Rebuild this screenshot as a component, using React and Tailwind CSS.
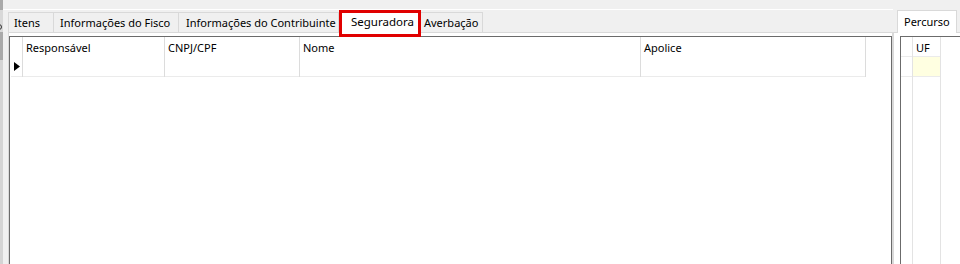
import React from "react";

const cols = [
  { label: "Responsável", w: 142 },
  { label: "CNPJ/CPF", w: 135 },
  { label: "Nome", w: 341 },
  { label: "Apolice", w: 225 },
];

export default function App() {
  return (
    <div className="w-[960px] h-[264px] bg-[#f0f0f0] flex overflow-hidden font-['Noto_Sans',sans-serif] text-[11px] leading-none text-black whitespace-nowrap">
      {/* left edge strip */}
      <div className="w-[3px] shrink-0 flex flex-col">
        <div className="h-[10px] bg-[#a9a9a9]" />
        <div className="h-[13px] bg-[#d8d8d8]" />
        <div className="h-[9px] bg-[#d8d8d8] overflow-hidden relative">
          <div className="absolute left-[-4px] top-[1px] w-[6px] h-[6px] rounded-full border border-[#333]" />
        </div>
        <div className="h-[28px] bg-[#a9a9a9]" />
        <div className="flex-1 bg-[#d4d4d4]" />
      </div>

      {/* main tab area */}
      <div className="w-[890px] shrink-0 flex flex-col">
        <div className="h-[9px]" />
        <div className="h-[1px] bg-white" />
        <div className="h-[22px] flex items-end pl-[5px] relative z-10">
          <div className="w-[46px] h-[20px] border border-b-0 border-[#d9d9d9] bg-[#f0f0f0] pl-[5px] flex items-center">Itens</div>
          <div className="w-[125px] h-[20px] border-t border-r border-[#d9d9d9] bg-[#f0f0f0] pl-[6px] flex items-center">Informações do Fisco</div>
          <div className="w-[160px] h-[20px] border-t border-r border-[#d9d9d9] bg-[#f0f0f0] pl-[7px] flex items-center">Informações do Contribuinte</div>
          <div className="w-[82px] h-[27px] self-start -mb-[5px] border-[3px] border-[#e00000] bg-white pl-[9px] pt-[3px] text-[11.5px]">Seguradora</div>
          <div className="w-[62px] h-[20px] border-t border-r border-[#d9d9d9] bg-[#f0f0f0] pl-[3px] flex items-center">Averbação</div>
        </div>
        <div className="flex-1 ml-[5px] border-t border-l border-r border-[#d9d9d9] bg-white pt-[3px] flex flex-col">
          <div className="flex-1 border-t border-l border-r border-[#6b6b6b] bg-white pl-[1px]">
            <div className="flex">
              <div className="w-[12px] border-r border-[#dcdcdc] flex flex-col">
                <div className="h-[20px]" />
                <div className="h-[20px] border-b border-[#ebebeb] flex items-center pl-[3px]">
                  <svg width="6" height="9" viewBox="0 0 6 9"><path d="M0 0 L6 4.5 L0 9 Z" fill="#000" /></svg>
                </div>
              </div>
              {cols.map((c) => (
                <div key={c.label} style={{ width: c.w }} className="border-r border-[#dcdcdc] flex flex-col shrink-0">
                  <div className="h-[20px] pl-[3px] pt-[5px]">{c.label}</div>
                  <div className="h-[20px] border-b border-[#ebebeb]" />
                </div>
              ))}
            </div>
          </div>
        </div>
      </div>

      {/* right panel */}
      <div className="flex-1 flex flex-col">
        <div className="h-[9px]" />
        <div className="h-[1px] bg-[#f0f0f0]" />
        <div className="h-[22px] flex items-end pl-[4px] relative z-10">
          <div className="w-[60px] h-[23px] -mb-[1px] border border-b-0 border-[#d9d9d9] bg-white pl-[6px] pt-[5px]">Percurso</div>
        </div>
        <div className="flex-1 border-t border-l border-[#d9d9d9] bg-white pt-[3px] pl-[6px] flex flex-col">
          <div className="flex-1 border-t border-l border-[#6b6b6b] bg-white flex">
            <div className="w-[12px] border-r border-[#e3e3e3] flex flex-col">
              <div className="h-[20px] border-b border-[#ebebeb]" />
              <div className="h-[20px] border-b border-[#ebebeb]" />
            </div>
            <div className="w-[28px] border-r border-[#e3e3e3] flex flex-col">
              <div className="h-[20px] pl-[3px] pt-[5px] border-b border-[#ebebeb]">UF</div>
              <div className="h-[20px] bg-[#ffffe1] border-b border-[#ebebeb]" />
            </div>
          </div>
        </div>
      </div>
    </div>
  );
}
